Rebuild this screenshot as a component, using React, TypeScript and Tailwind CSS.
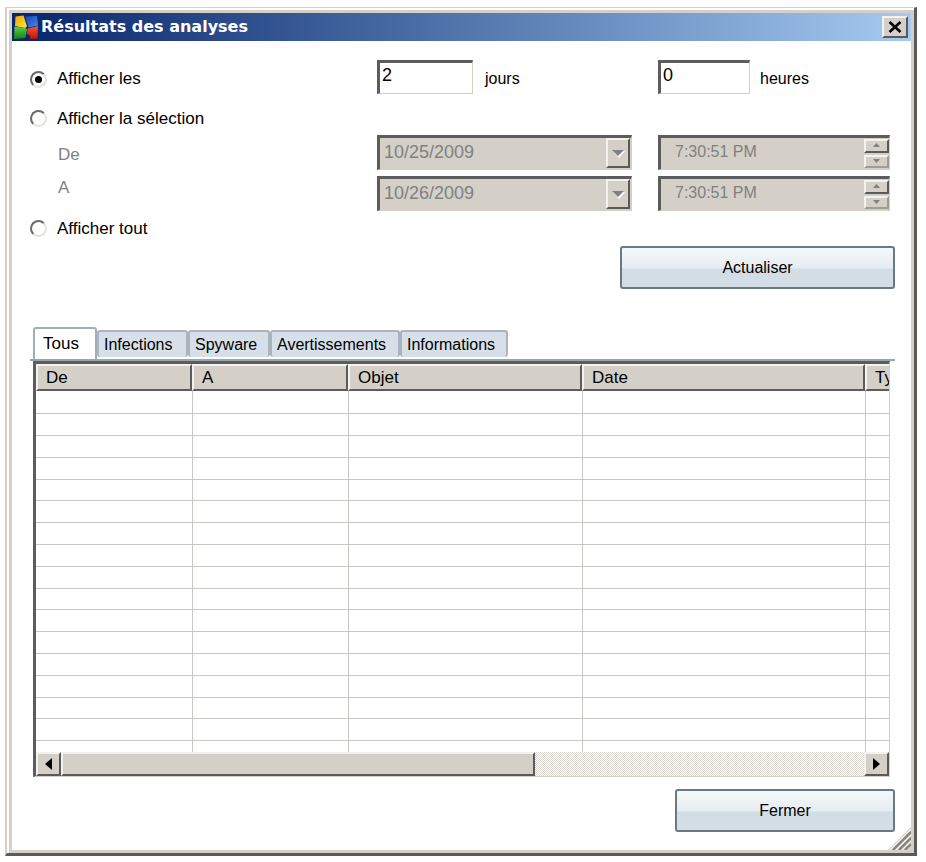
import React from 'react';

const TABS = [
  { label: 'Infections', className: 'w-[91px]' },
  { label: 'Spyware', className: 'w-[82px]' },
  { label: 'Avertissements', className: 'w-[130px]' },
  { label: 'Informations', className: 'w-[108px]' },
];

const COLUMNS = [
  { label: 'De', className: 'w-[156px]' },
  { label: 'A', className: 'w-[156px]' },
  { label: 'Objet', className: 'w-[234px]' },
  { label: 'Date', className: 'w-[283px]' },
  { label: 'Type', className: 'w-[160px]' },
];

const ROWS = Array.from({ length: 17 }, (_, i) => i);

const raised =
  'bg-[#d4d0c8] border-2 border-t-[#f4f2ee] border-l-[#f4f2ee] border-r-[#5a5a5a] border-b-[#5a5a5a]';
const sunken =
  'border-t-[3px] border-l-[3px] border-r border-b border-t-[#5c5c5c] border-l-[#5c5c5c] border-r-[#d4d0c8] border-b-[#d4d0c8]';

const LogoIcon = () => (
  <svg className="w-[26px] h-[25px] shrink-0" viewBox="0 0 26 25" aria-hidden="true">
    <defs>
      <linearGradient id="logo-yellow" x1="0" y1="0" x2="1" y2="1">
        <stop offset="0" stopColor="#f0a800" />
        <stop offset="1" stopColor="#ffe63c" />
      </linearGradient>
      <linearGradient id="logo-blue" x1="0" y1="0" x2="1" y2="1">
        <stop offset="0" stopColor="#1745b4" />
        <stop offset="1" stopColor="#4a86ea" />
      </linearGradient>
      <linearGradient id="logo-green" x1="0" y1="0" x2="0" y2="1">
        <stop offset="0" stopColor="#5cd046" />
        <stop offset="1" stopColor="#0c8414" />
      </linearGradient>
      <linearGradient id="logo-red" x1="0" y1="0" x2="0" y2="1">
        <stop offset="0" stopColor="#f8543c" />
        <stop offset="1" stopColor="#c01408" />
      </linearGradient>
    </defs>
    <path d="M2.500 1.500l8-1 3.500 11-2 1.500-10-2z" fill="url(#logo-yellow)" />
    <path d="M12 1.500l12-.500 1 9.500-9.500 2z" fill="url(#logo-blue)" />
    <path d="M1.500 11.500l10.500 1.500 2 1-1.500 9-11.500 1z" fill="url(#logo-green)" />
    <path d="M14.500 13.500l10.500-2.500-.500 12.500-7 .500-1-4-2.500-1z" fill="url(#logo-red)" />
  </svg>
);

const Radio: React.FC<{ id: string; label: string; checked?: boolean }> = ({ id, label, checked }) => (
  <div className="flex items-center gap-2.5">
    <span className="relative flex w-[17px] h-[17px] shrink-0">
      <input
        id={id}
        type="radio"
        name="periode"
        defaultChecked={checked}
        className="peer appearance-none w-[17px] h-[17px] rounded-full bg-white border-2 border-t-[#6a6a6a] border-l-[#6a6a6a] border-r-[#e6e3de] border-b-[#e6e3de]"
      />
      <span className="absolute inset-0 m-auto w-[7px] h-[7px] rounded-full bg-black pointer-events-none hidden peer-checked:block" />
    </span>
    <label htmlFor={id}>{label}</label>
  </div>
);

const DateSelect: React.FC<{ id: string; value: string }> = ({ id, value }) => (
  <div className="relative">
    <select
      id={id}
      disabled
      defaultValue={value}
      className={`appearance-none block w-full h-[35px] pl-1 pb-1 rounded-none bg-[#d4d0c8] text-[18px] text-[#808080] opacity-100 ${sunken}`}
    >
      <option value={value}>{value}</option>
    </select>
    <span className={`absolute right-[2px] top-[3px] bottom-[2px] w-6 flex items-center justify-center pointer-events-none ${raised}`}>
      <svg className="w-[14px] h-[9px]" viewBox="0 0 14 9" aria-hidden="true">
        <path d="M2 2h12L8 9z" fill="#fff" />
        <path d="M1 1h12L7 7z" fill="#808080" />
      </svg>
    </span>
  </div>
);

const TimeInput: React.FC<{ label: string; value: string }> = ({ label, value }) => (
  <div className={`flex h-[35px] bg-[#d4d0c8] ${sunken}`}>
    <input
      type="text"
      aria-label={label}
      defaultValue={value}
      disabled
      className="flex-1 min-w-0 pl-3.5 pb-1 text-base text-[#808080]"
    />
    <div className="flex flex-col w-[25px] py-px gap-[2px]">
      <button type="button" disabled aria-label="Augmenter" className={`flex-1 flex items-center justify-center ${raised}`}>
        <svg className="w-[7px] h-[5px]" viewBox="0 0 7 5" aria-hidden="true">
          <path d="M0 4h7L3.500 0z" fill="#808080" />
        </svg>
      </button>
      <button
        type="button"
        disabled
        aria-label="Diminuer"
        className="flex-1 flex items-center justify-center bg-[#d4d0c8] border-2 border-t-[#f4f2ee] border-l-[#f4f2ee] border-r-[#a09c94] border-b-[#a09c94]"
      >
        <svg className="w-[7px] h-[5px]" viewBox="0 0 7 5" aria-hidden="true">
          <path d="M0 0h7L3.500 4z" fill="#808080" />
        </svg>
      </button>
    </div>
  </div>
);

const ActionButton: React.FC<{ className: string; children: React.ReactNode }> = ({ className, children }) => (
  <button
    type="button"
    className={`h-[43px] rounded-[3px] border-2 border-[#6b7984] bg-linear-to-b from-[#f4f8fa] from-0% via-[#e6edf2] via-50% to-[#d3dde6] to-55% ${className}`}
  >
    {children}
  </button>
);

const TitleBar = () => (
  <header className="flex items-center h-7 pl-px pr-[3px] bg-linear-to-r from-[#0a246a] to-[#a6caf0]">
    <LogoIcon />
    <h1 className="flex-1 pl-[2px] font-['DejaVu_Sans',sans-serif] font-bold text-base leading-6 text-white">
      Résultats des analyses
    </h1>
    <button type="button" aria-label="Fermer la fenêtre" className={`flex items-center justify-center w-[26px] h-[22px] ${raised}`}>
      <svg className="w-[14px] h-[12px]" viewBox="0 0 14 12" aria-hidden="true">
        <path d="M1.500 1l11 10M12.500 1l-11 10" stroke="#000" strokeWidth="2.600" />
      </svg>
    </button>
  </header>
);

const FilterForm = () => (
  <form className="pr-[5px] text-[17px]">
    <div className="grid grid-cols-[minmax(0,321fr)_minmax(0,255fr)_minmax(0,232fr)] gap-x-[26px]">
      <div className="flex items-center h-[34px] pt-1">
        <Radio id="afficher-les" label="Afficher les" checked />
      </div>
      <div className="flex items-center gap-3 text-base">
        <input id="jours" type="text" defaultValue="2" className={`w-24 h-[34px] pl-[2px] pb-1.5 bg-white text-[18px] ${sunken}`} />
        <label htmlFor="jours" className="pt-1">jours</label>
      </div>
      <div className="flex items-center gap-2.5 text-base">
        <input id="heures" type="text" defaultValue="0" className={`w-[92px] h-[34px] pl-[2px] pb-1.5 bg-white text-[18px] ${sunken}`} />
        <label htmlFor="heures" className="pt-1">heures</label>
      </div>

      <div className="col-span-3 flex items-center h-[41px] pt-2">
        <Radio id="afficher-selection" label="Afficher la sélection" />
      </div>

      <label htmlFor="date-de" className="pl-7 pt-2.5 text-[#808080]">De</label>
      <DateSelect id="date-de" value="10/25/2009" />
      <TimeInput label="Heure de début" value="7:30:51 PM" />

      <label htmlFor="date-a" className="pl-7 pt-2 text-[#808080]">A</label>
      <div className="mt-1.5">
        <DateSelect id="date-a" value="10/26/2009" />
      </div>
      <div className="mt-1.5">
        <TimeInput label="Heure de fin" value="7:30:51 PM" />
      </div>

      <div className="col-span-3 flex items-center h-[35px]">
        <Radio id="afficher-tout" label="Afficher tout" />
      </div>
    </div>
  </form>
);

const ResultsList = () => (
  <div className={`ml-[3px] mr-[5px] ${sunken}`}>
    <div className="overflow-hidden">
      <table className="table-fixed border-collapse w-[989px]">
        <thead>
          <tr className="h-[27px]">
            {COLUMNS.map((col) => (
              <th key={col.label} className={`p-0 font-normal text-left ${col.className}`}>
                <div className="h-[27px] pl-2 text-[17px] leading-6 bg-[#d4d0c8] border-2 border-t-[#f4f2ee] border-l-[#f4f2ee] border-r-[#5c5c5c] border-b-[#5c5c5c]">
                  {col.label}
                </div>
              </th>
            ))}
          </tr>
        </thead>
        <tbody>
          {ROWS.map((row) => (
            <tr key={row} className={row === 16 ? 'h-3' : row % 5 === 4 ? 'h-[21px]' : 'h-[22px]'}>
              {COLUMNS.map((col) => (
                <td
                  key={col.label}
                  className={row === 16 ? 'p-0 border-r border-[#c9c7c2]' : 'p-0 border-r border-b border-[#c9c7c2]'}
                />
              ))}
            </tr>
          ))}
        </tbody>
      </table>
    </div>
    <div className="flex h-6 bg-[repeating-conic-gradient(#ffffff_0_25%,#d9d6cf_0_50%)] bg-size-[2px_2px]">
      <button type="button" aria-label="Défiler à gauche" className={`flex items-center justify-center w-[25px] ${raised}`}>
        <svg className="w-[7px] h-[12px]" viewBox="0 0 7 12" aria-hidden="true">
          <path d="M7 0v12L0 6z" fill="#000" />
        </svg>
      </button>
      <div className="flex-1">
        <div className={`w-[59%] h-full ${raised}`} />
      </div>
      <button type="button" aria-label="Défiler à droite" className={`flex items-center justify-center w-[25px] ${raised}`}>
        <svg className="w-[7px] h-[12px]" viewBox="0 0 7 12" aria-hidden="true">
          <path d="M0 0v12l7-6z" fill="#000" />
        </svg>
      </button>
    </div>
  </div>
);

const App: React.FC = () => {
  return (
    <div className="bg-white pt-[7px] pl-[5px] pr-[9px] pb-[6px] font-['Liberation_Sans',Arial,sans-serif] text-base leading-5 text-black">
      <div className="bg-white border-t border-l-2 border-r-[3px] border-b-[3px] border-t-[#d4d0c8] border-l-[#d4d0c8] border-r-[#5a5a5a] border-b-[#5a5a5a] pt-[2px] pl-[2px]">
        <div className="relative bg-white border-[3px] border-[#d4d0c8]">
          <TitleBar />

          <main className="pt-[19px] pl-[18px] pr-4 pb-[18px]">
            <FilterForm />

            <div className="flex justify-end">
              <ActionButton className="w-[275px]">Actualiser</ActionButton>
            </div>

            <section className="mt-[38px]">
              <div role="tablist" className="flex items-end pl-[3px] border-b-2 border-[#9aa5ad]">
                <button
                  type="button"
                  role="tab"
                  aria-selected="true"
                  className="w-16 h-8 pl-2 text-left text-[17px] bg-white border-2 border-b-0 border-[#a3adb5] rounded-t-[3px]"
                >
                  Tous
                </button>
                {TABS.map((tab) => (
                  <button
                    key={tab.label}
                    type="button"
                    role="tab"
                    aria-selected="false"
                    className={`h-[27px] mb-[2px] pl-[5px] text-left bg-[#d7e0e8] border-2 border-b-0 border-[#a9b4bd] rounded-[3px] ${tab.className}`}
                  >
                    {tab.label}
                  </button>
                ))}
              </div>
              <ResultsList />
            </section>

            <div className="flex justify-end mt-3">
              <ActionButton className="w-[220px]">Fermer</ActionButton>
            </div>
          </main>

          <svg className="absolute right-0 bottom-0 w-[23px] h-[23px]" viewBox="0 0 23 23" aria-hidden="true">
            <path d="M23 0v23H0z" fill="#d4d0c8" />
            <path d="M23 5L5 23M23 11L11 23M23 17L17 23" stroke="#808080" strokeWidth="2" />
            <path d="M23 2L2 23M23 8L8 23M23 14L14 23" stroke="#fff" strokeWidth="1" />
          </svg>
        </div>
      </div>
    </div>
  );
};

export default App;
